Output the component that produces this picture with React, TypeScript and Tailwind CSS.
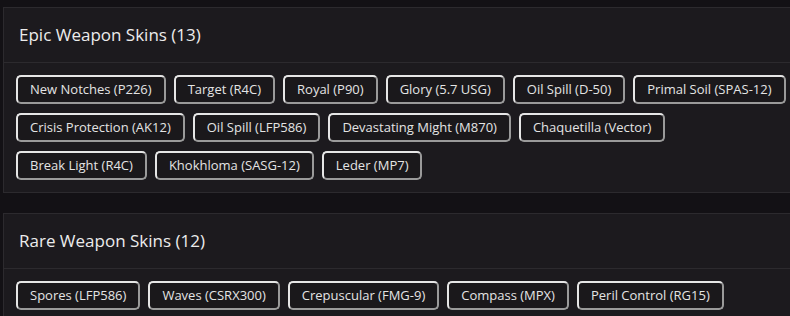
import React from "react";

const epic = [
  ["New Notches (P226)", "Target (R4C)", "Royal (P90)", "Glory (5.7 USG)", "Oil Spill (D-50)", "Primal Soil (SPAS-12)"],
  ["Crisis Protection (AK12)", "Oil Spill (LFP586)", "Devastating Might (M870)", "Chaquetilla (Vector)"],
  ["Break Light (R4C)", "Khokhloma (SASG-12)", "Leder (MP7)"],
];

const rare = [["Spores (LFP586)", "Waves (CSRX300)", "Crepuscular (FMG-9)", "Compass (MPX)", "Peril Control (RG15)"]];

function Chip({ label }: { label: string }) {
  return (
    <div className="h-[29px] flex items-center px-[12px] rounded-[5px] border-2 border-t-[#e6e6e6] border-l-[#e6e6e6] border-b-[#9a9a9a] border-r-[#9a9a9a] bg-[#1a181b] text-[13px] text-[#e4e4e4] whitespace-nowrap leading-none">
      {label}
    </div>
  );
}

function Section({ title, rows }: { title: string; rows: string[][] }) {
  return (
    <div className="ml-[3px] w-[800px] border border-[#2c2a2e] bg-[#1c1a1e]">
      <div className="h-[55px] flex items-center px-[15px] border-b border-[#2c2a2e]">
        <h2 className="text-[17px] text-[#ececec] font-medium">{title}</h2>
      </div>
      <div className="flex flex-col gap-[9px] px-[12px] py-[12px]">
        {rows.map((row, r) => (
          <div key={r} className="flex gap-[8px]">
            {row.map((it, i) => (
              <Chip key={i} label={it} />
            ))}
          </div>
        ))}
      </div>
    </div>
  );
}

export default function App() {
  return (
    <div
      className="w-[790px] h-[316px] overflow-hidden bg-[#131115] pt-[7px] flex flex-col gap-[20px]"
      style={{ fontFamily: '"Open Sans", sans-serif' }}
    >
      <Section title="Epic Weapon Skins (13)" rows={epic} />
      <Section title="Rare Weapon Skins (12)" rows={rare} />
    </div>
  );
}
